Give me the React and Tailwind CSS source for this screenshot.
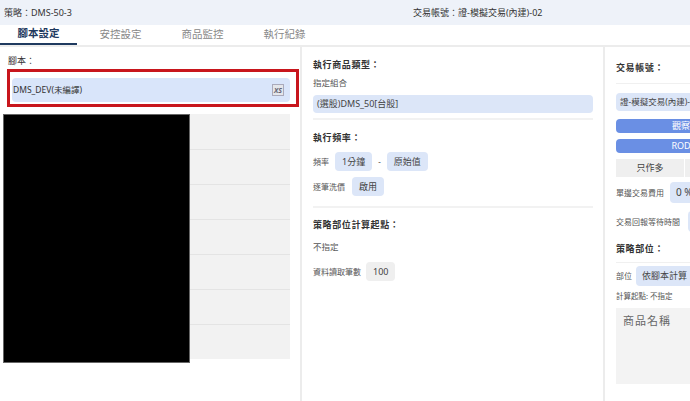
import React from 'react';

const Chip = ({ children, gray }) => (
  <span
    className={
      gray
        ? 'inline-flex items-center h-[19px] px-[7px] rounded-sm bg-[#efefef] text-[#444] text-[9px]'
        : 'inline-flex items-center h-[19px] px-[7px] rounded-sm bg-[#dce6f8] text-[#444] text-[9px]'
    }
  >
    {children}
  </span>
);

const Title = ({ children }) => (
  <div className="text-[9px] leading-[14px] font-bold text-[#333] tracking-[0.6px]">{children}</div>
);

const tabs = ['腳本設定', '安控設定', '商品監控', '執行紀錄'];

const App = () => {
  return (
    <div className="w-[690px] h-[401px] overflow-hidden bg-white text-[9px] text-[#555] whitespace-nowrap font-['Noto_Sans','Noto_Sans_CJK_TC',sans-serif]">
      {/* header */}
      <div className="h-[25px] bg-[#eef2f9] flex items-center text-[#333]">
        <span className="w-[413px] pl-[4px]">策略：DMS-50-3</span>
        <span>交易帳號：證-模擬交易(內建)-02</span>
      </div>

      {/* tabs */}
      <div className="h-[22px] flex gap-[5px] border-b-2 border-[#ececec]">
        {tabs.map((t, i) => (
          <div
            key={t}
            className={
              i === 0
                ? 'w-[77px] flex items-center justify-center text-[10.5px] font-bold text-[#1f3a5f] border-b-2 border-[#1f3a5f]'
                : 'w-[77px] flex items-center justify-center text-[10.5px] text-[#888]'
            }
          >
            {t}
          </div>
        ))}
      </div>

      <div className="flex h-[354px]">
        {/* left panel */}
        <div className="w-[300px] shrink-0 pt-[8px]">
          <div className="pl-[8px] leading-[12px] text-[#333]">腳本：</div>
          <div className="mt-[2px] ml-[7px] w-[292px] border-[3px] border-[#c8161d] pl-[2px] pr-[6px] pt-[6px] pb-[2px]">
            <div className="h-[24px] bg-[#d9e5fa] rounded-sm flex items-center pl-[1px] pr-[6px] text-[#333] text-[8.5px]">
              <span>DMS_DEV(未編譯)</span>
              <span className="ml-auto w-[12px] h-[12px] bg-[#e4e6ea] border border-[#aab] flex items-center justify-center text-[7px] leading-none font-bold text-[#667] italic">XS</span>
            </div>
          </div>
          <div className="mt-[7px] ml-[3px] flex">
            <div className="w-[187px] h-[249px] bg-black border border-[#666]" />
            <div className="w-[100px]">
              {[0, 1, 2, 3, 4, 5, 6].map((r) => (
                <div key={r} className={r === 0 ? 'h-[35px] bg-[#f2f2f2]' : 'h-[35px] bg-[#f2f2f2] border-t border-[#e4e4e4]'} />
              ))}
            </div>
          </div>
        </div>

        <div className="w-[2px] shrink-0 bg-[#ececec]" />

        {/* middle panel */}
        <div className="w-[301px] shrink-0 pl-[11px] pr-[10px] pt-[11px]">
          <Title>執行商品類型：</Title>
          <div className="mt-[4px] leading-[14px] text-[8.5px]">指定組合</div>
          <div className="mt-[5px] h-[18px] bg-[#dce6f8] rounded-sm flex items-center pl-[4px] text-[#444]">(選股)DMS_50[台股]</div>
          <div className="mt-[5px] h-[2px] bg-[#f2f2f2]" />
          <div className="mt-[11px]">
            <Title>執行頻率：</Title>
          </div>
          <div className="mt-[7px] flex items-center gap-[6px] text-[8px]">
            <span>頻率</span>
            <Chip>1分鐘</Chip>
            <span>-</span>
            <Chip>原始值</Chip>
          </div>
          <div className="mt-[6px] flex items-center gap-[7px] text-[8px]">
            <span>逐筆洗價</span>
            <Chip>啟用</Chip>
          </div>
          <div className="mt-[10px] h-[2px] bg-[#f2f2f2]" />
          <div className="mt-[10px]">
            <Title>策略部位計算起點：</Title>
          </div>
          <div className="mt-[8px] leading-[14px] text-[8.5px]">不指定</div>
          <div className="mt-[8px] flex items-center gap-[5px] text-[8px]">
            <span>資料讀取筆數</span>
            <Chip gray>100</Chip>
          </div>
        </div>

        <div className="w-[2px] shrink-0 bg-[#ececec]" />

        {/* right panel */}
        <div className="w-[160px] shrink-0 pl-[11px] pt-[14px]">
          <Title>交易帳號：</Title>
          <div className="mt-[8px] h-[1px] bg-[#f0f0f0]" />
          <div className="mt-[9px] h-[18px] w-[130px] bg-[#dce6f8] rounded-sm flex items-center pl-[4px] text-[#444] text-[8.5px] overflow-hidden">證-模擬交易(內建)-02</div>
          <div className="mt-[8px] h-[14px] w-[130px] bg-[#6a8fe4] rounded-sm flex items-center justify-center text-white">觀察</div>
          <div className="mt-[6px] h-[14px] w-[130px] bg-[#6a8fe4] rounded-sm flex items-center justify-center text-white">ROD</div>
          <div className="mt-[6px] flex w-[130px] gap-[1px]">
            <div className="w-[68px] h-[18px] bg-[#efefef] flex items-center justify-center text-[#444]">只作多</div>
            <div className="w-[61px] h-[18px] bg-[#efefef] flex items-center justify-center text-[#444]">只作空</div>
          </div>
          <div className="mt-[5px] flex items-center gap-[6px] text-[8px]">
            <span>單邊交易費用</span>
            <span className="inline-flex items-center h-[21px] px-[6px] rounded-sm bg-[#dce6f8] text-[#444] text-[10px]">0 %</span>
          </div>
          <div className="mt-[8px] flex items-center gap-[8px] text-[8px]">
            <span>交易回報等待時間</span>
            <span className="inline-flex items-center h-[21px] px-[6px] rounded-sm bg-[#dce6f8] text-[#444] text-[9px]">3 秒</span>
          </div>
          <div className="mt-[10px]">
            <Title>策略部位：</Title>
          </div>
          <div className="mt-[6px] h-[1px] bg-[#f0f0f0]" />
          <div className="mt-[3px] flex items-center gap-[4px] text-[8px]">
            <span>部位</span>
            <span className="inline-flex items-center h-[20px] px-[6px] rounded-sm bg-[#dce6f8] text-[#444] text-[9px]">依腳本計算</span>
          </div>
          <div className="mt-[4px] text-[7.5px] leading-[12px]">計算起點: 不指定</div>
          <div className="mt-[6px] h-[76px] w-[130px] bg-[#f3f3f3] pl-[7px] pt-[5px] text-[11px] text-[#666] tracking-[1px]">商品名稱</div>
        </div>
      </div>
    </div>
  );
};

export default App;
